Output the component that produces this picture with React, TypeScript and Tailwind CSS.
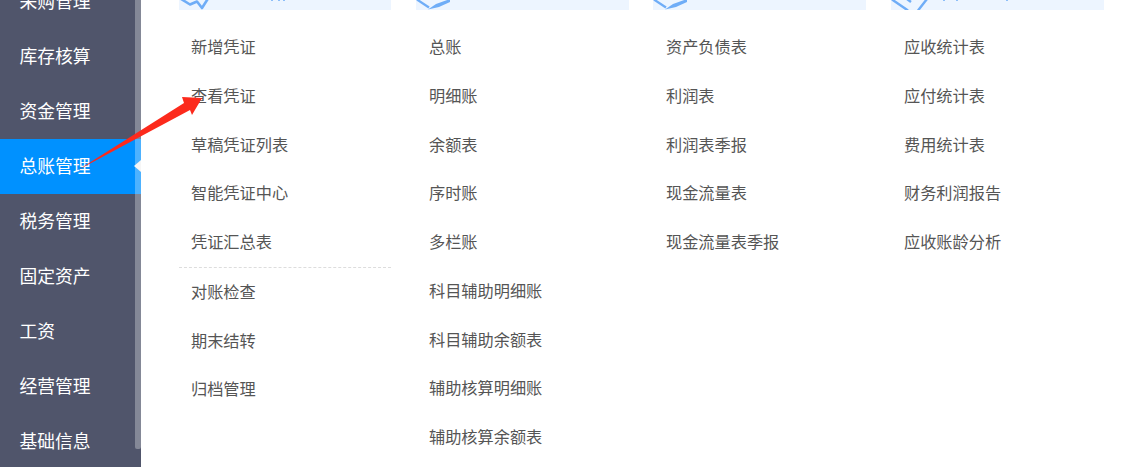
const font = "font-['Noto_Sans_CJK_SC','Liberation_Sans',sans-serif]";

const side = ['采购管理', '库存核算', '资金管理', '总账管理', '税务管理', '固定资产', '工资', '经营管理', '基础信息'];

const cols: { items: string[]; w: string; ml: string; pl: string }[] = [
  { items: ['新增凭证', '查看凭证', '草稿凭证列表', '智能凭证中心', '凭证汇总表', '|', '对账检查', '期末结转', '归档管理'], w: 'w-[212px]', ml: 'ml-0', pl: 'pl-[12px]' },
  { items: ['总账', '明细账', '余额表', '序时账', '多栏账', '科目辅助明细账', '科目辅助余额表', '辅助核算明细账', '辅助核算余额表'], w: 'w-[213px]', ml: 'ml-[25px]', pl: 'pl-[13px]' },
  { items: ['资产负债表', '利润表', '利润表季报', '现金流量表', '现金流量表季报'], w: 'w-[213px]', ml: 'ml-[24px]', pl: 'pl-[13px]' },
  { items: ['应收统计表', '应付统计表', '费用统计表', '财务利润报告', '应收账龄分析'], w: 'w-[213px]', ml: 'ml-[25px]', pl: 'pl-[13px]' },
];

function HeaderIcon({ i }: { i: number }) {
  const blue = '#6fadf7';
  return (
    <svg width="213" height="10" viewBox="0 0 213 10" fill="none" className="block">
      {i === 0 && (
        <>
          <path d="M2 -1 L11 4.5 L18 1.5 L23 8 L30 -3" stroke={blue} strokeWidth="2.6" strokeLinejoin="round" />
          <path d="M93 0 V1 M100 0 V1 M105 0 V1" stroke={blue} strokeWidth="1.5" />
        </>
      )}
      {(i === 1 || i === 2) && (
        <>
          <path d="M1 -0.5 L13 7.5" stroke={blue} strokeWidth="2.2" />
          <polygon points="12,9.5 20,4 34,-1 34,2 23,7" fill={blue} />
        </>
      )}
      {i === 3 && (
        <>
          <path d="M1 -0.5 L17 10.5 M27 10.5 L36 -1 M16 -1 L20 2" stroke={blue} strokeWidth="2.4" />
          <path d="M53 0 V1 M66 0 V1 M116 0 V1" stroke={blue} strokeWidth="1.5" />
        </>
      )}
    </svg>
  );
}

export default function App() {
  return (
    <div className={`relative flex h-[467px] w-[1127px] overflow-hidden bg-white ${font}`}>
      <aside className="relative h-full w-[141px] shrink-0 overflow-hidden bg-[#50556b]">
        <ul className="-mt-[26px]">
          {side.map((s) => (
            <li
              key={s}
              className={`relative flex h-[55px] items-center pb-[2px] pl-[19.5px] text-[17.8px] text-white ${s === '总账管理' ? 'bg-[#0091ff]' : ''}`}
            >
              {s}
            </li>
          ))}
        </ul>
        <span className="absolute right-0 top-[160px] h-0 w-0 border-y-[6px] border-r-[7px] border-y-transparent border-r-[#f2f2f2]" />
        <div className="absolute right-0 top-0 h-[449px] w-[6px] rounded-b-[2px] bg-white/30" />
      </aside>
      <main className="ml-[38px] flex items-start">
        {cols.map((c, i) => (
          <section key={i} className={`${c.w} ${c.ml} shrink-0`}>
            <div className="h-[10px] overflow-hidden bg-[#edf5ff]">
              <HeaderIcon i={i} />
            </div>
            <ul className={`mt-[12px] ${c.pl} text-[16.2px] text-[#555555]`}>
              {c.items.map((t, k) =>
                t === '|' ? (
                  <li key={k} className="-ml-[12px] h-0 translate-y-[1px] border-t border-dashed border-[#dddddd]" />
                ) : (
                  <li key={k} className="flex h-[48.75px] items-center">{t}</li>
                ),
              )}
            </ul>
          </section>
        ))}
      </main>
      <svg className="pointer-events-none absolute left-0 top-0" width="1127" height="467" viewBox="0 0 1127 467">
        <polygon points="78,170 184,103 182,97 202,98 192,115 190,110" fill="#fc2a1c" />
      </svg>
    </div>
  );
}
